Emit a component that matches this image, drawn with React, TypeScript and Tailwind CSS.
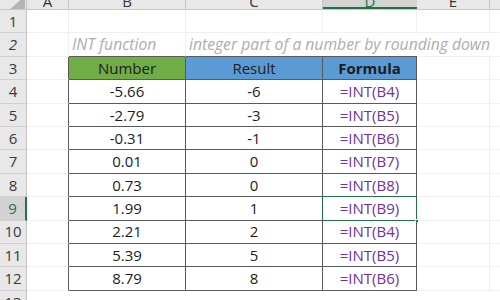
import React from "react";

const rows = [
  { n: 4, b: "-5.66", c: "-6", d: "=INT(B4)" },
  { n: 5, b: "-2.79", c: "-3", d: "=INT(B5)" },
  { n: 6, b: "-0.31", c: "-1", d: "=INT(B6)" },
  { n: 7, b: "0.01", c: "0", d: "=INT(B7)" },
  { n: 8, b: "0.73", c: "0", d: "=INT(B8)" },
  { n: 9, b: "1.99", c: "1", d: "=INT(B9)" },
  { n: 10, b: "2.21", c: "2", d: "=INT(B4)" },
  { n: 11, b: "5.39", c: "5", d: "=INT(B5)" },
  { n: 12, b: "8.79", c: "8", d: "=INT(B6)" },
];

const font = { fontFamily: '"Open Sans", "Noto Sans", sans-serif' };

function RowHead({ n, active }: { n: number; active?: boolean }) {
  return (
    <div
      className={
        "w-[27px] shrink-0 flex items-center justify-center text-[15px] border-b border-b-[#d0d0d0] " +
        (active
          ? "bg-[#d3d3d3] text-[#217346] border-r-2 border-r-[#217346]"
          : "bg-[#e8e8e8] text-[#3a3a3a] border-r border-r-[#c4c4c4]")
      }
    >
      {n}
    </div>
  );
}

export default function App() {
  return (
    <div className="w-[500px] h-[300px] overflow-hidden bg-white text-[#1c1c1c]" style={font}>
      {/* column headers */}
      <div className="flex h-[10px] bg-[#e8e8e8] border-b border-[#c8c8c8] text-[15px] leading-[15px] text-[#333] overflow-hidden">
        <div className="w-[27px] shrink-0 relative border-r border-[#c4c4c4]">
          <svg width="27" height="10" className="absolute left-0 top-0">
            <polygon points="9,10 25,10 25,-4" fill="#b5b5b5" />
          </svg>
        </div>
        <div className="w-[42px] shrink-0 flex justify-center border-r border-[#c4c4c4]"><span className="-mt-[6px]">A</span></div>
        <div className="w-[117px] shrink-0 flex justify-center border-r border-[#c4c4c4]"><span className="-mt-[6px]">B</span></div>
        <div className="w-[137px] shrink-0 flex justify-center border-r border-[#c4c4c4]"><span className="-mt-[6px]">C</span></div>
        <div className="w-[94px] shrink-0 flex justify-center bg-[#d3d3d3] border-b-2 border-[#217346] text-[#217346]"><span className="-mt-[6px]">D</span></div>
        <div className="w-[73px] shrink-0 flex justify-center border-r border-[#c4c4c4]"><span className="-mt-[6px]">E</span></div>
        <div className="flex-1" />
      </div>

      {/* row 1 */}
      <div className="flex h-[23.4px]">
        <RowHead n={1} />
        <div className="w-[42px] shrink-0 border-r border-b border-[#f0f0f0]" />
        <div className="w-[117px] shrink-0 border-r border-b border-[#f0f0f0]" />
        <div className="w-[137px] shrink-0 border-r border-b border-[#f0f0f0]" />
        <div className="w-[94px] shrink-0 border-r border-b border-[#f0f0f0]" />
        <div className="w-[73px] shrink-0 border-r border-b border-[#f0f0f0]" />
        <div className="flex-1 border-b border-[#f0f0f0]" />
      </div>

      {/* row 2 */}
      <div className="flex h-[23.4px] italic text-[15.7px] text-[#adadad]">
        <RowHead n={2} />
        <div className="w-[42px] shrink-0 border-r border-b border-[#f0f0f0]" />
        <div className="w-[117px] shrink-0 flex items-center pl-[3px] border-r border-r-[#f0f0f0] border-b border-b-[#5a5a5a] whitespace-nowrap not-italic">
          <span className="italic">INT function</span>
        </div>
        <div className="w-[137px] shrink-0 flex items-center pl-[3px] border-b border-[#5a5a5a] whitespace-nowrap overflow-visible relative z-10">
          <span>integer part of a number by rounding down</span>
        </div>
        <div className="w-[94px] shrink-0 border-b border-[#5a5a5a]" />
        <div className="w-[73px] shrink-0 border-b border-[#f0f0f0]" />
        <div className="flex-1 border-b border-[#f0f0f0]" />
      </div>

      {/* row 3 - table header */}
      <div className="flex h-[23.4px] text-[15px]">
        <RowHead n={3} />
        <div className="w-[42px] shrink-0 border-r border-r-[#5a5a5a] border-b border-b-[#f0f0f0]" />
        <div className="w-[117px] shrink-0 flex items-center justify-center bg-[#70ad47] border-r border-b border-[#5a5a5a]">Number</div>
        <div className="w-[137px] shrink-0 flex items-center justify-center bg-[#5b9bd5] border-r border-b border-[#5a5a5a]">Result</div>
        <div className="w-[94px] shrink-0 flex items-center justify-center bg-[#5b9bd5] border-r border-b border-[#5a5a5a] font-bold">Formula</div>
        <div className="w-[73px] shrink-0 border-r border-b border-[#f0f0f0]" />
        <div className="flex-1 border-b border-[#f0f0f0]" />
      </div>

      {rows.map((r) => {
        const active = r.n === 9;
        return (
          <div key={r.n} className="flex h-[23.4px] text-[15px]">
            <RowHead n={r.n} active={active} />
            <div className="w-[42px] shrink-0 border-r border-r-[#5a5a5a] border-b border-b-[#f0f0f0]" />
            <div className="w-[117px] shrink-0 flex items-center justify-center border-r border-b border-[#5a5a5a]">{r.b}</div>
            <div className="w-[137px] shrink-0 flex items-center justify-center border-r border-b border-[#5a5a5a]">{r.c}</div>
            <div className="w-[94px] shrink-0 flex items-center justify-center border-r border-b border-[#5a5a5a] text-[#7030a0] relative">
              {r.d}
              {active && (
                <>
                  <div className="absolute -left-px -top-px -right-px -bottom-px border border-[#217346]" />
                  <div className="absolute -right-[3px] -bottom-[3px] w-[4px] h-[4px] bg-[#217346] border border-white" />
                </>
              )}
            </div>
            <div className="w-[73px] shrink-0 border-r border-b border-[#f0f0f0]" />
            <div className="flex-1 border-b border-[#f0f0f0]" />
          </div>
        );
      })}

      {/* row 13 */}
      <div className="flex h-[23.4px]">
        <RowHead n={13} />
        <div className="flex-1" />
      </div>
    </div>
  );
}
